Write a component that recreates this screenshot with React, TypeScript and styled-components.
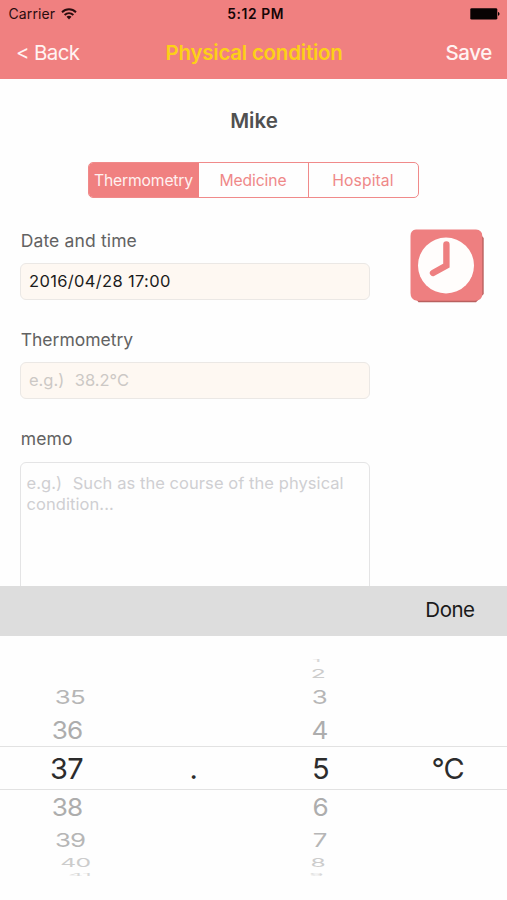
import React from 'react';
import styled, { createGlobalStyle, css } from 'styled-components';

const CORAL = '#f08080';

const GlobalStyle = createGlobalStyle`
  * { box-sizing: border-box; }
  body { margin: 0; background: #fff; }
  button, input { font: inherit; }
`;

const Screen = styled.div`
  width: 507px;
  height: 900px;
  display: flex;
  flex-direction: column;
  overflow: hidden;
  background: #fefefe;
  font-family: 'Inter', 'Liberation Sans', sans-serif;
  color: #555;
`;

const Header = styled.header`
  flex: none;
  height: 79px;
  background: ${CORAL};
`;

const StatusBar = styled.div`
  height: 27px;
  padding: 1px 7px 0 8.5px;
  display: grid;
  grid-template-columns: 1fr auto 1fr;
  align-items: center;
  font-size: 14px;
  line-height: 20px;
  color: #2a0c0e;
`;

const Carrier = styled.div`
  display: flex;
  align-items: center;
  gap: 6px;
  letter-spacing: 0.1px;
`;

const Clock = styled.div`
  padding-left: 3px;
  font-weight: 600;
  font-size: 13.8px;
  letter-spacing: 0.6px;
  color: #140506;
`;

const BatterySlot = styled.div`
  display: flex;
  justify-content: flex-end;
`;

const NavBar = styled.nav`
  height: 51px;
  padding: 0 15px 0 16px;
  display: grid;
  grid-template-columns: 1fr auto 1fr;
  align-items: center;
  font-size: 20.5px;
  line-height: 28px;
`;

const NavButton = styled.button<{ $end?: boolean }>`
  justify-self: ${p => (p.$end ? 'end' : 'start')};
  border: 0;
  padding: 0;
  background: none;
  color: #fff3f2;
  font-weight: ${p => (p.$end ? 500 : 400)};
  letter-spacing: ${p => (p.$end ? '-0.35px' : '-0.65px')};
`;

const Title = styled.h1`
  margin: 0;
  font-size: inherit;
  font-weight: 600;
  letter-spacing: -0.23px;
  color: #fdd017;
`;

const Content = styled.main`
  flex: none;
  height: 507px;
  padding-top: 28px;
  overflow: hidden;
`;

const Name = styled.h2`
  margin: 0;
  padding-left: 1px;
  font-size: 20.5px;
  line-height: 28px;
  font-weight: 600;
  text-align: center;
  color: #505050;
`;

const Segments = styled.div`
  width: 331px;
  height: 36px;
  margin: 27px 0 0 88px;
  display: grid;
  grid-template-columns: 110px 109px 1fr;
  border: 1px solid #f08a8a;
  border-radius: 5px;
  overflow: hidden;
`;

const Segment = styled.button<{ $active?: boolean; $spacing: number }>`
  border: 0;
  padding: 1px 0 0;
  font-size: 15.7px;
  letter-spacing: ${p => p.$spacing}px;
  text-indent: -1px;
  white-space: nowrap;
  background: ${p => (p.$active ? CORAL : 'transparent')};
  color: ${p => (p.$active ? '#fff1f0' : '#ef8888')};
  & + & + & { border-left: 1px solid #f08a8a; }
`;

const Form = styled.div`
  display: grid;
  grid-template-columns: 350px 74px;
  justify-content: space-between;
  align-items: start;
  padding: 29px 23px 0 20px;
`;

const Fields = styled.div`
  display: flex;
  flex-direction: column;
  gap: 26px;
`;

const Field = styled.label`
  display: flex;
  flex-direction: column;
  gap: 10px;
`;

const Label = styled.span<{ $spacing?: number }>`
  padding-left: 0.7px;
  height: 26px;
  line-height: 27px;
  font-size: 17.5px;
  letter-spacing: ${p => p.$spacing ?? 0}px;
  color: #626262;
`;

const box = css`
  border: 1px solid #ebe8e5;
  border-radius: 6px;
`;

const Input = styled.div<{ $placeholder?: boolean }>`
  ${box}
  height: 37px;
  padding-left: 8px;
  line-height: 35px;
  font-size: 16.5px;
  white-space: pre;
  letter-spacing: ${p => (p.$placeholder ? 0 : 0.33)}px;
  background: #fef8f2;
  color: ${p => (p.$placeholder ? '#ccc8c5' : '#1c1c1c')};
`;

const Gap = styled.span<{ $width: number }>`
  display: inline-block;
  width: ${p => p.$width}px;
`;

const Memo = styled.div`
  ${box}
  border-color: #e4e4e5;
  height: 150px;
  margin-top: 1px;
  padding: 10px 5.6px;
  font-size: 16.5px;
  line-height: 21px;
  letter-spacing: 0.06px;
  white-space: nowrap;
  color: #cfcfd2;
`;

const ClockButton = styled.button`
  margin-top: 2px;
  padding: 0;
  border: 0;
  background: none;
  line-height: 0;
`;

const Accessory = styled.div`
  flex: none;
  height: 50px;
  padding: 0 32.5px 3px 0;
  display: flex;
  justify-content: flex-end;
  align-items: center;
  background: #dddddd;
`;

const Done = styled.button`
  border: 0;
  padding: 0;
  background: none;
  font-size: 20.5px;
  line-height: 28px;
  letter-spacing: -0.5px;
  color: #1a1a1a;
`;

const Picker = styled.div`
  position: relative;
  flex: 1;
  padding-top: 22px;
  display: grid;
  grid-template-columns: 134px 119px 134px 120px;
  background: #fefefe;
`;

const SelectionBand = styled.div`
  position: absolute;
  top: 110px;
  left: 0;
  right: 0;
  height: 44px;
  border: solid #e2e2e2;
  border-width: 1px 0;
`;

const Wheel = styled.div`
  display: grid;
  grid-template-rows: 6px 19px 28px 39px 38px 39px 26px 19px 5px;
  justify-items: center;
  font-size: 29px;
`;

const Slot = styled.div<{ $level: number }>`
  width: 100%;
  display: flex;
  align-items: center;
  justify-content: center;
  overflow: ${p => (p.$level === 4 ? 'hidden' : 'visible')};
  color: ${p => ['#2c2c2c', '#adadad', '#b6b6b6', '#cccccc', '#d8d8d8'][p.$level]};
`;

const Value = styled.span<{ $level: number; $shift: number }>`
  flex: none;
  line-height: 38px;
  height: 38px;
  letter-spacing: -0.8px;
  margin-right: -0.8px;
  white-space: nowrap;
  transform: translateX(${p => p.$shift}px)
    scale(${p => ['1, 1', '0.9, 0.83', '0.89, 0.66', '0.85, 0.4', '0.8, 0.12'][p.$level]});
`;

function WifiIcon() {
  return (
    <svg width="16" height="12" viewBox="0 0 16 12" fill="none" stroke="#2a0c0e" strokeWidth="1.9">
      <path d="M1 4.2C5 0.3 11 0.3 15 4.2" />
      <path d="M3.6 7C6.2 4.5 9.8 4.5 12.4 7" />
      <path d="M5.5 8.7C7 7.3 9 7.3 10.5 8.7L8 11.4Z" fill="#2a0c0e" stroke="none" />
    </svg>
  );
}

function BatteryIcon() {
  return (
    <svg width="30" height="12" viewBox="0 0 30 12" fill="#080303">
      <rect x="0.3" y="0.2" width="27" height="11.4" rx="1.4" />
      <path d="M28 4C30 4.3 30 7.5 28 7.8Z" />
    </svg>
  );
}

function ClockIcon() {
  return (
    <svg width="74" height="74" viewBox="0 0 74 74">
      <path d="M3 66V8L68 2.5L73.7 9V65L66 73.2H8.5Z" fill="#b9605f" />
      <path d="M6 0.5H66Q72.3 1 72.3 7V65Q72 71.8 65 71.8H7Q0.5 71 0.5 64V7Q0.5 1 6 0.5Z" fill="#ee7f80" />
      <circle cx="36" cy="36.5" r="28" fill="#fffdfc" />
      <path d="M36.4 15.5V36.5L23 44" fill="none" stroke="#ee7f80" strokeWidth="6.4" strokeLinecap="round" />
    </svg>
  );
}

type Item = { text: string; shift: number } | null;

const DEGREES: Item[] = [
  null,
  null,
  { text: '35', shift: 3 },
  { text: '36', shift: 0 },
  { text: '37', shift: -1 },
  { text: '38', shift: 0 },
  { text: '39', shift: 3 },
  { text: '40', shift: 7.5 },
  { text: '41', shift: 12.5 },
];

const POINT: Item[] = [null, null, null, null, { text: '.', shift: -0.5 }, null, null, null, null];

const TENTHS: Item[] = [
  { text: '1', shift: -4 },
  { text: '2', shift: -2.5 },
  { text: '3', shift: -1.3 },
  { text: '4', shift: -0.3 },
  { text: '5', shift: 0 },
  { text: '6', shift: -0.3 },
  { text: '7', shift: -1 },
  { text: '8', shift: -2.7 },
  { text: '9', shift: -4.5 },
];

const UNIT: Item[] = [null, null, null, null, { text: '°C', shift: 0.3 }, null, null, null, null];

function PickerWheel({ items }: { items: Item[] }) {
  return (
    <Wheel>
      {items.map((item, i) => {
        const level = Math.abs(i - 4);
        return (
          <Slot key={i} $level={level}>
            {item && (
              <Value $level={level} $shift={item.shift}>
                {item.text}
              </Value>
            )}
          </Slot>
        );
      })}
    </Wheel>
  );
}

export default function App() {
  return (
    <>
      <GlobalStyle />
      <Screen>
        <Header>
          <StatusBar>
            <Carrier>
              Carrier
              <WifiIcon />
            </Carrier>
            <Clock>5:12 PM</Clock>
            <BatterySlot>
              <BatteryIcon />
            </BatterySlot>
          </StatusBar>
          <NavBar>
            <NavButton>&lt; Back</NavButton>
            <Title>Physical condition</Title>
            <NavButton $end>Save</NavButton>
          </NavBar>
        </Header>
        <Content>
          <Name>Mike</Name>
          <Segments>
            <Segment $active $spacing={-0.18}>Thermometry</Segment>
            <Segment $spacing={-0.1}>Medicine</Segment>
            <Segment $spacing={0.1}>Hospital</Segment>
          </Segments>
          <Form>
            <Fields>
              <Field>
                <Label $spacing={0.14}>Date and time</Label>
                <Input>2016/04/28 17:00</Input>
              </Field>
              <Field>
                <Label>Thermometry</Label>
                <Input $placeholder>
                  e.g.)<Gap $width={10.5} />38.2°C
                </Input>
              </Field>
              <Field>
                <Label $spacing={0.15}>memo</Label>
                <Memo>
                  e.g.)<Gap $width={10.5} />Such as the course of the physical
                  <br />
                  condition...
                </Memo>
              </Field>
            </Fields>
            <ClockButton aria-label="Set current time">
              <ClockIcon />
            </ClockButton>
          </Form>
        </Content>
        <Accessory>
          <Done>Done</Done>
        </Accessory>
        <Picker>
          <SelectionBand />
          <PickerWheel items={DEGREES} />
          <PickerWheel items={POINT} />
          <PickerWheel items={TENTHS} />
          <PickerWheel items={UNIT} />
        </Picker>
      </Screen>
    </>
  );
}
